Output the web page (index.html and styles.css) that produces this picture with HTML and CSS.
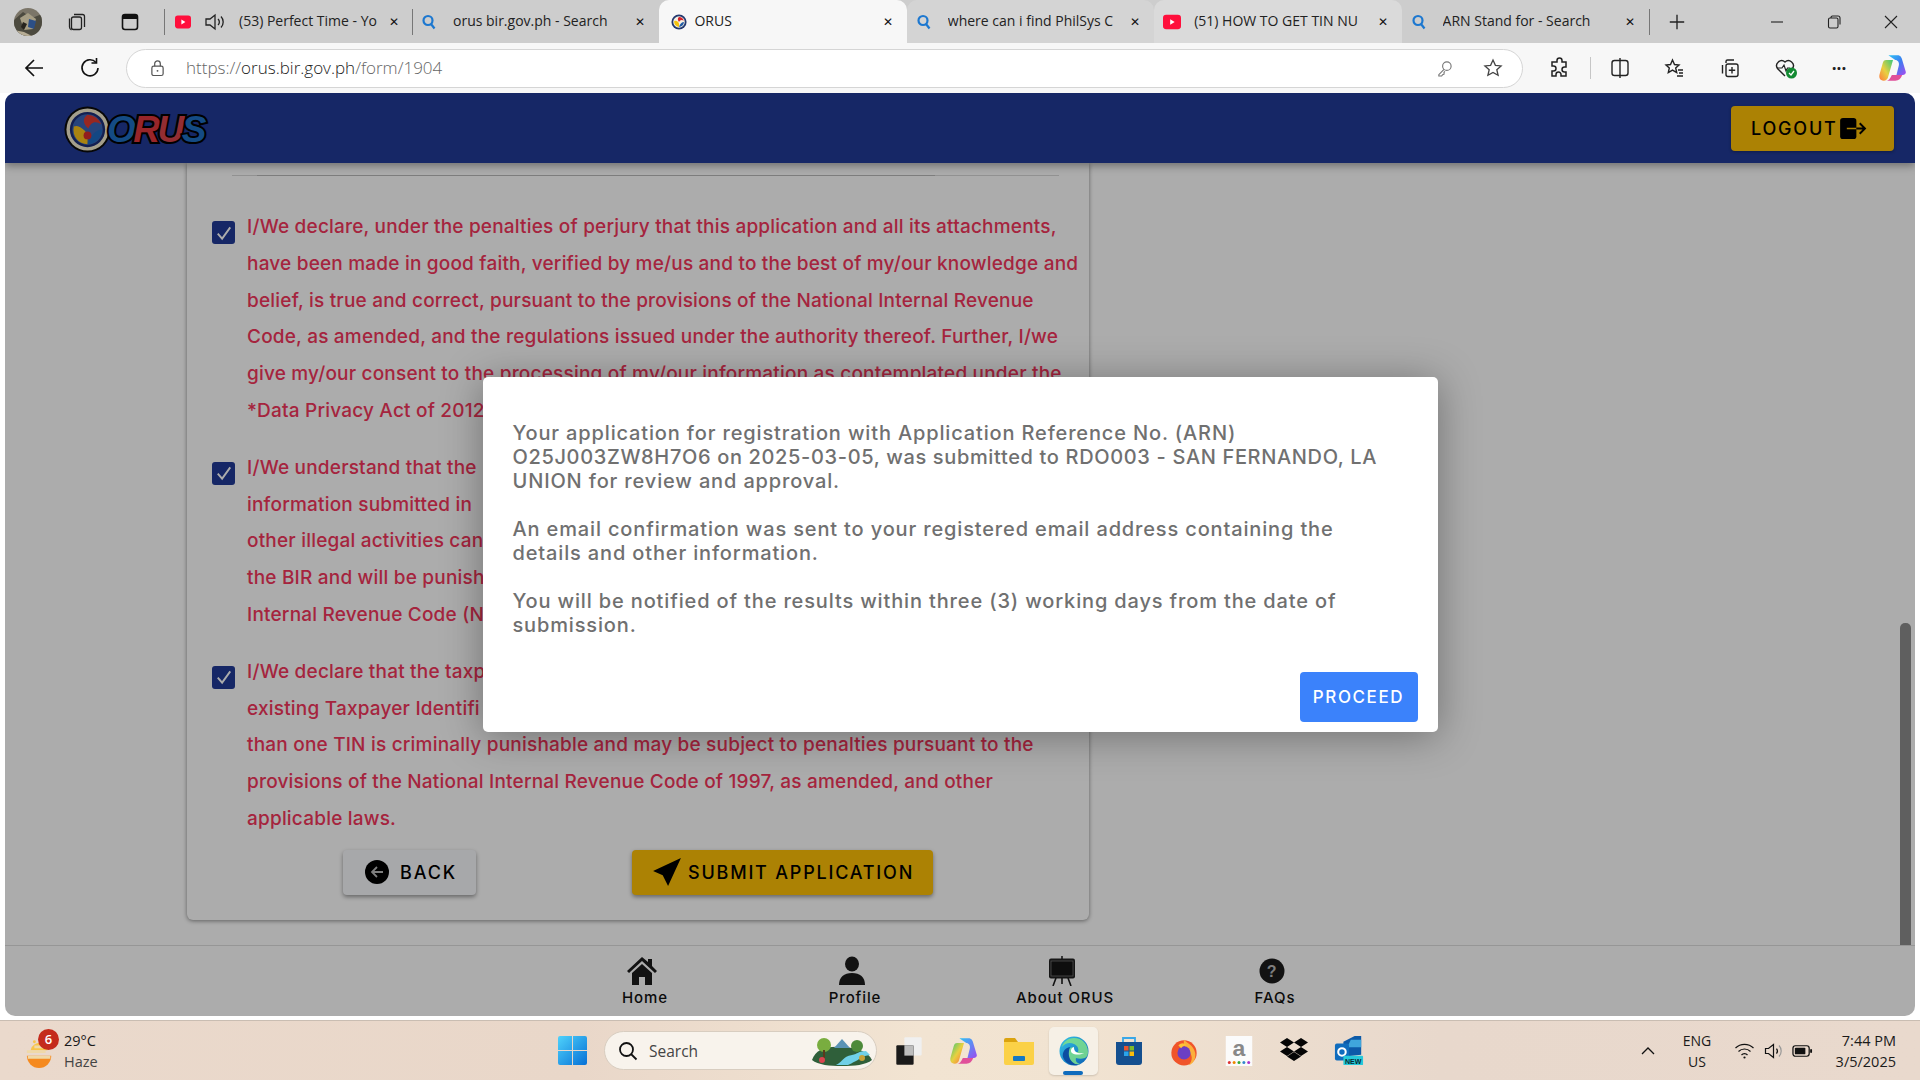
FILE: index.html
```html
<!DOCTYPE html>
<html lang="en">
<head>
<meta charset="utf-8">
<title>ORUS</title>
<link rel="stylesheet" href="styles.css">
</head>
<body>
<div class="tabbar">
  <div class="tb-left">
    <svg class="avatar" viewBox="0 0 28 28"><defs><clipPath id="av"><circle cx="14" cy="14" r="14"/></clipPath></defs><g clip-path="url(#av)"><rect width="28" height="28" fill="#7b7568"/><path d="M0 12 9 4l9 6 10-4v22H0z" fill="#4c4a3f"/><path d="M6 10l8-5 8 6-3 10-9 1z" fill="#a69d84"/><path d="M15 11l7 2-2 8-6-2z" fill="#2c4f86"/><path d="M9 14l4 2-3 6-3-3z" fill="#26231d"/><path d="M0 22l10 2 8 4H0z" fill="#b7ad95"/></g></svg>
    <svg class="ti ti-coll" viewBox="0 0 20 20" fill="none" stroke="#222" stroke-width="1.3"><path d="M7 2.5h8.5a2 2 0 0 1 2 2V15"/><rect x="4.5" y="5" width="10" height="12.5" rx="2"/><path d="M2.5 6.5V15a3.5 3.5 0 0 0 2 3"/></svg>
    <svg class="ti ti-vert" viewBox="0 0 20 20"><rect x="2.5" y="2.5" width="15" height="15" rx="2.5" fill="none" stroke="#111" stroke-width="1.6"/><path d="M3 3h14v4H3z" fill="#111"/></svg>
    <span class="sep sep-a"></span>
    <div class="tab tab-first">
      <svg class="fav" viewBox="0 0 20 20"><rect y="2" width="20" height="16" rx="3.5" fill="#ff0f3c"/><path d="M8 7l5 3-5 3z" fill="#fff"/></svg>
      <svg class="ti ti-sound" viewBox="0 0 22 20" fill="none" stroke="#222" stroke-width="1.3"><path d="M2 7h4l5-4v14l-5-4H2z"/><path d="M14 7a4 4 0 0 1 0 6M17 4.500a8 8 0 0 1 0 11"/></svg>
      <span class="tab-title">(53) Perfect Time - Yo</span>
      <span class="x">✕</span>
    </div>
    <span class="sep"></span>
  </div>
  <div class="tab">
    <svg class="fav" viewBox="0 0 16 16" fill="none" stroke="#1d78d0" stroke-width="2.200"><circle cx="7" cy="6.500" r="4.500"/><path d="M10 10l3.500 4.500"/></svg>
    <span class="tab-title">orus bir.gov.ph - Search</span><span class="x">✕</span>
  </div>
  <div class="tab tab-active">
    <svg class="fav" viewBox="0 0 18 18"><circle cx="9" cy="9" r="8.500" fill="#23386f"/><circle cx="9" cy="9" r="6.500" fill="#f6f2e4"/><path d="M9 3.500a5.500 5.500 0 0 1 5.300 4C12 6 10 7 9 9 7.500 7 7 5 9 3.500z" fill="#d8232a"/><path d="M3.600 8A5.500 5.500 0 0 0 9 14.500c0-2 .5-4-1-5.500-1-1-3-2-4.400-1z" fill="#f4c20d"/><path d="M9 14.500c3 0 5.500-2.500 5.500-5.500-2 0-4.500 2-5.500 5.500z" fill="#1f5aa6"/></svg>
    <span class="tab-title">ORUS</span><span class="x">✕</span>
  </div>
  <div class="tab tab-lite">
    <svg class="fav" viewBox="0 0 16 16" fill="none" stroke="#1d78d0" stroke-width="2.200"><circle cx="7" cy="6.500" r="4.500"/><path d="M10 10l3.500 4.500"/></svg>
    <span class="tab-title">where can i find PhilSys C</span><span class="x">✕</span>
  </div>
  <div class="tab tab-hover">
    <svg class="fav fav-yt" viewBox="0 0 20 20"><rect y="2" width="20" height="16" rx="3.500" fill="#ff0f3c"/><path d="M8 7l5 3-5 3z" fill="#fff"/></svg>
    <span class="tab-title">(51) HOW TO GET TIN NU</span><span class="x">✕</span>
  </div>
  <div class="tab">
    <svg class="fav" viewBox="0 0 16 16" fill="none" stroke="#1d78d0" stroke-width="2.200"><circle cx="7" cy="6.500" r="4.500"/><path d="M10 10l3.500 4.500"/></svg>
    <span class="tab-title">ARN Stand for - Search</span><span class="x">✕</span>
  </div>
  <span class="sep"></span>
  <svg class="ti ti-plus" viewBox="0 0 20 20" stroke="#222" stroke-width="1.500"><path d="M10 2v16M2 10h16"/></svg>
  <div class="winctl">
    <svg viewBox="0 0 14 14" stroke="#222" stroke-width="1.100" fill="none"><path d="M1 7h12"/></svg>
    <svg viewBox="0 0 14 14" stroke="#222" stroke-width="1.100" fill="none"><rect x="1.500" y="3" width="9.500" height="10" rx="1.500"/><path d="M4 3V2.500A1.500 1.500 0 0 1 5.500 1H11a2 2 0 0 1 2 2v6.500"/></svg>
    <svg viewBox="0 0 14 14" stroke="#222" stroke-width="1.100" fill="none"><path d="M1 1l12 12M13 1L1 13"/></svg>
  </div>
</div>

<div class="toolbar">
  <svg class="tool tool-back" viewBox="0 0 22 22" fill="none" stroke="#111" stroke-width="1.700"><path d="M20 11H3M11 3l-8 8 8 8"/></svg>
  <svg class="tool tool-reload" viewBox="0 0 22 22" fill="none" stroke="#111" stroke-width="1.600"><path d="M17 5.500A8 8 0 1 0 19 11"/><path d="M17.500 1v5h-5"/></svg>
  <div class="urlbar">
    <svg class="lock" viewBox="0 0 16 18" fill="none" stroke="#555" stroke-width="1.300"><rect x="2" y="7" width="12" height="10" rx="2"/><path d="M5 7V4.500a3 3 0 0 1 6 0V7"/><circle cx="8" cy="12" r="1" fill="#555" stroke="none"/></svg>
    <span class="url"><span class="url-dim">https://</span>orus.bir.gov.ph<span class="url-dim">/form/1904</span></span>
    <svg class="key" viewBox="0 0 18 18" fill="none" stroke="#777" stroke-width="1.200"><circle cx="11.500" cy="6.500" r="4.500"/><path d="M8.500 10 3 15.500V17h3l1-1.500 1.500-.5v-2l1-1"/></svg>
    <svg class="star" viewBox="0 0 20 20" fill="none" stroke="#444" stroke-width="1.300"><path d="M10 2l2.400 5.300 5.700.6-4.300 3.800 1.300 5.600L10 14.400l-5.100 2.900 1.300-5.600L1.900 7.900l5.700-.6z"/></svg>
  </div>
  <svg class="tool tool-ext" viewBox="0 0 22 22" fill="none" stroke="#222" stroke-width="1.500"><path d="M9 3.500a2.500 2.500 0 0 1 5 0V5h4v5h-1.500a2.500 2.500 0 0 0 0 5H18v4h-5v-1.500a2.500 2.500 0 0 0-5 0V19H4v-5h1.500a2.500 2.500 0 0 0 0-5H4V5h5z"/></svg>
  <span class="tool-sep"></span>
  <svg class="tool tool-split" viewBox="0 0 22 22" fill="none" stroke="#222" stroke-width="1.400"><rect x="3" y="3.500" width="16" height="15" rx="2.500"/><path d="M11 1v20"/></svg>
  <svg class="tool tool-favs" viewBox="0 0 22 22" fill="none" stroke="#222" stroke-width="1.400"><path d="M9.500 3l2 4.500 4.500.5-3.300 3 1 4.500-4.200-2.400L5.300 15.500l1-4.500L3 8l4.500-.5zM15 13h5M16 16h4M14 19h6"/></svg>
  <svg class="tool tool-coll" viewBox="0 0 22 22" fill="none" stroke="#222" stroke-width="1.400"><path d="M7 6V4.500A1.500 1.500 0 0 1 8.500 3H15M3.500 8v8.500"/><rect x="7" y="7" width="12" height="12.500" rx="2"/><path d="M13 10v6.500M9.800 13.200h6.400"/></svg>
  <svg class="tool tool-health" viewBox="0 0 24 22"><path d="M11 19 3.500 11.500A5 5 0 0 1 11 5a5 5 0 0 1 7.500 6.500" fill="none" stroke="#222" stroke-width="1.400"/><path d="M3 11h5l2-3 2 6 1.500-3H16" fill="none" stroke="#222" stroke-width="1.200"/><circle cx="17.500" cy="16" r="5.500" fill="#128a32"/><path d="M15 16l2 2 3-4" fill="none" stroke="#fff" stroke-width="1.300"/></svg>
  <span class="more">···</span>
  <svg class="tool tool-copilot" viewBox="0 0 26 26"><defs><linearGradient id="cp1" x1="0" y1="0" x2="1" y2="1"><stop offset="0" stop-color="#2dc3f5"/><stop offset=".5" stop-color="#3c7df0"/><stop offset="1" stop-color="#a64cf0"/></linearGradient><linearGradient id="cp2" x1="0" y1="1" x2="1" y2="0"><stop offset="0" stop-color="#ff7a3c"/><stop offset=".45" stop-color="#e8d040"/><stop offset="1" stop-color="#38c87a"/></linearGradient></defs><path d="M9 2h8c2.500 0 3.500 2 4 4l3 10c.6 2-1 3-3 3h-5l2-8c.8-3-1-5-3-5z" fill="url(#cp1)"/><path d="M7 6h6L9 20c-.6 3-2 4-4 4-3.500 0-4.500-3-3.500-6L4 9c.5-2 1.500-3 3-3z" fill="url(#cp2)"/><path d="M12 19h9c-1 3-3 5-6 5H7c2 0 3.500-1.500 5-5z" fill="#e0509a"/></svg>
</div>

<div class="winbody">
  <div class="app">
    <header class="app-header">
      <div class="logo">
        <svg class="seal" viewBox="0 0 48 48"><circle cx="24" cy="24" r="23.500" fill="#0b0b0b"/><circle cx="24" cy="24" r="21.500" fill="#f4ecd0"/><circle cx="24" cy="24" r="18" fill="#1d2f78"/><circle cx="24" cy="24" r="15.500" fill="#3a66b8"/><path d="M24 9a15 15 0 0 1 14 10C32 14 27 17 25 23c-5-4-7-10-1-14z" fill="#e23a32"/><path d="M10 21c-2 10 5 18 14 18 0-6 1-10-3-14-3-3-7-6-11-4z" fill="#fbc21a"/><path d="M24 39c8 0 15-7 15-15-6 0-12 6-15 15z" fill="#1d6ac2"/><circle cx="24" cy="30" r="4" fill="#d92b2b"/></svg>
        <span class="logo-text"><span class="lo">O</span><span class="lr">R</span><span class="lu">U</span><span class="ls">S</span></span>
      </div>
      <button class="logout">LOGOUT
        <svg class="logout-ic" viewBox="0 0 28 22"><rect x="0" y="0" width="17" height="22" rx="3" fill="#000"/><path d="M7 11h10" stroke="#ffc107" stroke-width="1.800"/><path d="M17 11h9M20.500 5.500 26 11l-5.500 5.500" fill="none" stroke="#000" stroke-width="2"/></svg>
      </button>
    </header>

    <div class="app-main">
      <div class="scroll-content">
        <section class="card">
          <div class="rule"></div>
          <div class="decl">
            <span class="check"><svg viewBox="0 0 16 16"><path d="M3 8.500 6.500 12.500 13 3.500" fill="none" stroke="#fff" stroke-width="1.500"/></svg></span>
            <p>I/We declare, under the penalties of perjury that this application and all its attachments,<br>have been made in good faith, verified by me/us and to the best of my/our knowledge and<br>belief, is true and correct, pursuant to the provisions of the National Internal Revenue<br>Code, as amended, and the regulations issued under the authority thereof. Further, I/we<br>give my/our consent to the processing of my/our information as contemplated under the<br>*Data Privacy Act of 2012 (</p>
          </div>
          <div class="decl">
            <span class="check"><svg viewBox="0 0 16 16"><path d="M3 8.500 6.500 12.500 13 3.500" fill="none" stroke="#fff" stroke-width="1.500"/></svg></span>
            <p>I/We understand that the<br>information submitted in<br>other illegal activities can<br>the BIR and will be punish<br>Internal Revenue Code (N</p>
          </div>
          <div class="decl decl-last">
            <span class="check"><svg viewBox="0 0 16 16"><path d="M3 8.500 6.500 12.500 13 3.500" fill="none" stroke="#fff" stroke-width="1.500"/></svg></span>
            <p>I/We declare that the taxp<br>existing Taxpayer Identifi<br>than one TIN is criminally punishable and may be subject to penalties pursuant to the<br>provisions of the National Internal Revenue Code of 1997, as amended, and other<br>applicable laws.</p>
          </div>
          <div class="actions">
            <button class="btn btn-back">
              <svg class="btn-ic" viewBox="0 0 24 24"><circle cx="12" cy="12" r="12" fill="#000"/><path d="M18 12H7M12 7l-5 5 5 5" fill="none" stroke="#bbb" stroke-width="1.800"/></svg>
              BACK
            </button>
            <button class="btn btn-submit">
              <svg class="btn-ic-plane" viewBox="0 0 28 28"><path d="M27 1 1 13l9 4zM27 1 10 17l5 10z" fill="#000"/></svg>
              SUBMIT APPLICATION
            </button>
          </div>
        </section>
      </div>
      <div class="scrolltrack"><div class="scrollthumb"></div></div>
    </div>

    <footer class="app-footer">
      <div class="nav-item">
        <svg class="nav-ic" viewBox="0 0 32 30"><path d="M16 1 1 15l2 2L16 5l13 12 2-2-5-5V3h-4v3z" fill="#1c1c1c"/><path d="M6 17 16 8l10 9v12h-7v-8h-6v8H6z" fill="#1c1c1c"/></svg>
        <span>Home</span>
      </div>
      <div class="nav-item">
        <svg class="nav-ic" viewBox="0 0 32 30"><ellipse cx="16" cy="8" rx="7" ry="7.500" fill="#1c1c1c"/><path d="M3 29c0-8 5-12 13-12s13 4 13 12z" fill="#1c1c1c"/></svg>
        <span>Profile</span>
      </div>
      <div class="nav-item">
        <svg class="nav-ic" viewBox="0 0 32 30"><path d="M16 0v3" stroke="#1c1c1c" stroke-width="1.500"/><rect x="3" y="2.500" width="26" height="20" rx="2" fill="#222"/><rect x="5" y="5" width="22" height="15" fill="#151515" stroke="#777" stroke-width=".8"/><path d="M10 22 7 30M22 22l3 8M16 22v6" stroke="#1c1c1c" stroke-width="1.600"/></svg>
        <span>About ORUS</span>
      </div>
      <div class="nav-item">
        <svg class="nav-ic" viewBox="0 0 32 30"><circle cx="16" cy="15" r="12.500" fill="#1c1c1c"/><text x="16" y="21" class="q">?</text></svg>
        <span>FAQs</span>
      </div>
    </footer>

    <div class="overlay">
      <div class="modal">
        <div class="modal-body">
          <p>Your application for registration with Application Reference No. (ARN)<br><span class="tight">O25J003ZW8H7O6 on 2025-03-05, was submitted to RDO003 - SAN FERNANDO, LA</span><br>UNION for review and approval.</p>
          <p>An email confirmation was sent to your registered email address containing the<br>details and other information.</p>
          <p>You will be notified of the results within three (3) working days from the date of<br>submission.</p>
        </div>
        <div class="modal-foot"><button class="proceed">PROCEED</button></div>
      </div>
    </div>
  </div>
</div>

<div class="taskbar">
  <div class="tk-left">
    <div class="weather">
      <svg class="sun" viewBox="0 0 32 32"><path d="M2 19h26a13 13 0 0 1-26 0z" fill="#f58a1f"/><path d="M10 7a9 9 0 0 1 14 6H6a9 9 0 0 1 4-6z" fill="#f8c44a"/><path d="M2 13h20v3H2zM3 19h24v3H3zM10 8h14v3H10z" fill="#efd9a8"/><circle cx="10" cy="4" r="1.500" fill="#f8c44a"/></svg>
      <span class="badge">6</span>
      <div class="wtext"><span class="w1">29°C</span><span class="w2">Haze</span></div>
    </div>
  </div>
  <svg class="start" viewBox="0 0 29 29"><defs><linearGradient id="st" x1="0" y1="0" x2="1" y2="1"><stop offset="0" stop-color="#4fd2fb"/><stop offset="1" stop-color="#0670d6"/></linearGradient></defs><path fill="url(#st)" d="M0 2q0-2 2-2h12v14H0zM15 0h12q2 0 2 2v12H15zM0 15h14v14H2q-2 0-2-2zM15 15h14v12q0 2-2 2H15z"/></svg>
  <div class="tk-search">
    <svg class="tk-search-ic" viewBox="0 0 20 20" fill="none" stroke="#111" stroke-width="1.800"><circle cx="8.500" cy="8.500" r="6.500"/><path d="M13 13l5.500 5.500"/></svg>
    <span class="tk-search-text">Search</span>
    <svg class="scene" viewBox="0 0 64 30"><path d="M2 24c4-10 12-14 30-13s26 5 30 13c-6 5-18 6-30 6S8 29 2 24z" fill="#2f5f3a"/><path d="M24 12l8-9 8 9z" fill="#5a93b5"/><path d="M26 29c8-4 6-8 16-10 6-1 6-4 14-4l4 4c-8 1-10 4-14 6s-6 3-8 4z" fill="#6fd0e8"/><circle cx="14" cy="9" r="7" fill="#79ad3f"/><rect x="13" y="14" width="2" height="8" fill="#5b3a1c"/><circle cx="47" cy="10" r="6" fill="#4d8a3a"/><circle cx="12" cy="24" r="3" fill="#d8454f"/><circle cx="52" cy="22" r="3" fill="#c6a23a"/></svg>
  </div>
  <div class="tk-apps">
    <span class="tk-app"><svg viewBox="0 0 26 26"><rect x="9" y="1" width="15" height="16" rx="1" fill="#f0f0f0"/><rect x="2" y="8" width="15" height="17" rx="1" fill="#1a1a1a"/><rect x="9" y="8" width="8" height="9" fill="#bdbdbd"/></svg></span>
    <span class="tk-app"><svg viewBox="0 0 26 26"><defs><linearGradient id="c1" x1="0" y1="0" x2="1" y2="1"><stop offset="0" stop-color="#2dc3f5"/><stop offset="1" stop-color="#9a4cf0"/></linearGradient><linearGradient id="c2" x1="0" y1="0" x2="1" y2="1"><stop offset="0" stop-color="#38c87a"/><stop offset=".5" stop-color="#e8d040"/><stop offset="1" stop-color="#ff6a3c"/></linearGradient></defs><path d="M9 2h8c2.500 0 3.500 2 4 4l3 10c.6 2-1 3-3 3h-5l2-8c.8-3-1-5-3-5z" fill="url(#c1)"/><path d="M7 6h6L9 20c-.6 3-2 4-4 4-3.500 0-4.500-3-3.500-6L4 9c.5-2 1.500-3 3-3z" fill="url(#c2)"/><path d="M12 19h9c-1 3-3 5-6 5H7c2 0 3.500-1.500 5-5z" fill="#e0509a"/></svg></span>
    <span class="tk-app"><svg viewBox="0 0 30 28"><path d="M0 3q0-2 2-2h9l3 4H0z" fill="#dba30f"/><path d="M0 5h30v21q0 2-2 2H2q-2 0-2-2z" fill="#fbd147"/><rect x="9" y="19" width="12" height="5" rx="1" fill="#1578c4"/></svg></span>
    <span class="tk-app tk-active"><svg viewBox="0 0 30 30"><defs><linearGradient id="e1" x1="0" y1="0" x2="1" y2="1"><stop offset="0" stop-color="#35c4e8"/><stop offset="1" stop-color="#0a5fb4"/></linearGradient></defs><circle cx="15" cy="15" r="14.500" fill="url(#e1)"/><path d="M29 16c0-8-6-14-14-14C9 2 4 6 3 11c3-4 8-5 12-3 4 2 5 5 4 8-3 0-6 0-6-2 0-1 1-2 2-3-5 0-8 4-7 9 1 6 7 9 13 8-3-1-5-3-4-6 3 1 6 1 9 0 2-1 3-3 3-6z" fill="#7fe08a" opacity=".85"/><path d="M11 11c-5 1-8 5-7 10 2 6 8 9 15 8-4-1-8-4-9-9-.5-3 0-6 1-9z" fill="#0b4ea2"/><path d="M15 11c-3 1-4 4-2 6 3 2 8 2 12 0-1 0-6 1-8-1s-2-3-2-5z" fill="#fff"/></svg><i class="tk-ind"></i></span>
    <span class="tk-app"><svg viewBox="0 0 28 30"><path d="M8 6V2h12v4" fill="none" stroke="#38a7e8" stroke-width="1.800"/><path d="M1 6h26v20q0 3-3 3H4q-3 0-3-3z" fill="#144f8f"/><rect x="9" y="10" width="4.500" height="4.500" fill="#e8552e"/><rect x="14.500" y="10" width="4.500" height="4.500" fill="#7fba2a"/><rect x="9" y="15.500" width="4.500" height="4.500" fill="#2aa4ea"/><rect x="14.500" y="15.500" width="4.500" height="4.500" fill="#fbbc0a"/></svg></span>
    <span class="tk-app"><svg viewBox="0 0 30 32"><circle cx="15" cy="18" r="13.500" fill="#f0542a"/><path d="M15 4c2 3 10 5 12 14 1 7-3 12-7 13 5-5 4-12-1-15-2-2-5-6-4-12z" fill="#fbb03b"/><circle cx="15" cy="18" r="7" fill="#6b3fc4"/><path d="M9 10c3-3 6-3 9 0-3 0-5 1-6 3z" fill="#fcc437"/></svg></span>
    <span class="tk-app"><svg viewBox="0 0 30 34"><rect width="30" height="34" fill="#fbfbfb"/><text x="15" y="23" class="az">a</text><g><circle cx="4" cy="30" r="1.700" fill="#d33"/><circle cx="9.500" cy="30" r="1.700" fill="#e80"/><circle cx="15" cy="30" r="1.700" fill="#3a3"/><circle cx="20.500" cy="30" r="1.700" fill="#38c"/><circle cx="26" cy="30" r="1.700" fill="#a3c"/></g></svg></span>
    <span class="tk-app"><svg viewBox="0 0 30 28"><path d="M8 1l7 4.500L8 10 1 5.500zM22 1l7 4.500L22 10l-7-4.500zM8 10l7 4.500L8 19l-7-4.500zM22 10l7 4.500L22 19l-7-4.500zM15 15l7 4.500L15 24l-7-4.500z" fill="#050505"/></svg></span>
    <span class="tk-app"><svg viewBox="0 0 32 32"><path d="M10 6 22 0h7v20l-19 2z" fill="#0d5aa8"/><path d="M18 4h11v8H14z" fill="#3fa6dc"/><rect x="1" y="8" width="15" height="18" rx="2" fill="#0f6cbd"/><circle cx="8.500" cy="17" r="4" fill="none" stroke="#fff" stroke-width="2.200"/><rect x="10" y="21" width="21" height="10" rx="1" fill="#25c9d9"/><text x="20.500" y="29.500" class="newt">NEW</text></svg></span>
  </div>
  <svg class="chev" viewBox="0 0 14 10" fill="none" stroke="#111" stroke-width="1.300"><path d="M1 8l6-6 6 6"/></svg>
  <div class="lang"><span>ENG</span><span>US</span></div>
  <div class="tray">
    <svg viewBox="0 0 20 18" fill="none" stroke="#111" stroke-width="1.200"><path d="M1 6a13 13 0 0 1 18 0M4 9.500a8.500 8.500 0 0 1 12 0M7 13a4 4 0 0 1 6 0"/><circle cx="10" cy="15.500" r="1.100" fill="#111" stroke="none"/></svg>
    <svg viewBox="0 0 20 18" fill="none" stroke="#111" stroke-width="1.200"><path d="M2 6.500h3l5-4v13l-5-4H2z"/><path d="M13 6.500a4 4 0 0 1 0 5"/><path d="M15.500 3.500a8 8 0 0 1 0 11" stroke="#999"/></svg>
    <svg viewBox="0 0 22 18"><rect x="1" y="3.500" width="17" height="11" rx="2.500" fill="none" stroke="#111" stroke-width="1.300"/><rect x="3" y="5.500" width="11" height="7" rx="1" fill="#111"/><rect x="19" y="7" width="2" height="4" rx="1" fill="#111"/></svg>
  </div>
  <div class="clock"><span>7:44 PM</span><span>3/5/2025</span></div>
</div>
</body>
</html>
```
FILE: styles.css
```css
* { box-sizing: border-box; }
html, body { margin: 0; height: 100%; overflow: hidden; }
body {
  display: flex; flex-direction: column; width: 1920px; height: 1080px;
  font-family: "Open Sans", "Noto Sans", sans-serif; background: #f7f7f7; color: #111;
}
svg { display: block; flex: none; }

/* browser tab strip */
.tabbar { height: 43px; background: #cdcdcd; display: flex; align-items: center; flex: none; }
.tb-left { display: flex; align-items: center; width: 412px; height: 43px; position: relative; }
.avatar { width: 28px; height: 28px; margin-left: 14px; }
.ti-coll { width: 20px; height: 20px; margin-left: 25px; }
.ti-vert { width: 20px; height: 20px; margin-left: 33px; }
.sep { width: 1px; height: 26px; background: #777; flex: none; }
.sep-a { margin-left: 24px; }
.tab {
  width: 247.4px; height: 43px; display: flex; align-items: center; padding: 0 12px 0 9px;
  font-size: 14px; color: #222; flex: none; border-radius: 10px 10px 0 0;
}
.tab-first { width: 247px; padding: 0 11px 0 10px; }
.tab-active { background: #f7f7f7; padding-left: 12px; }
.tab-lite { background: #d4d4d4; }
.tab-hover { background: #dadada; }
.fav { width: 16px; height: 16px; }
.fav-yt { width: 18px; height: 18px; }
.ti-sound { width: 22px; height: 20px; margin-left: 13px; }
.tab-title {
  flex: 1; margin: -2px 10px 0 16px; white-space: nowrap; overflow: hidden; min-width: 0;
}
.tab-active .tab-title { margin-left: 7px; }
.tab-first .tab-title { margin-left: 13px; }
.tab-hover .tab-title { margin-left: 13px; }
.x { width: 14px; font-size: 12px; color: #111; text-align: center; flex: none; line-height: 1; }
.ti-plus { width: 18px; height: 18px; margin-left: 18px; }
.winctl { margin-left: auto; display: flex; gap: 43px; padding-right: 22px; }
.winctl svg { width: 14px; height: 14px; }

/* toolbar */
.toolbar { height: 50px; flex: none; background: #f7f7f7; display: flex; align-items: center; }
.tool { width: 22px; height: 22px; }
.tool-back { margin-left: 23px; }
.tool-reload { margin-left: 34px; }
.urlbar {
  margin-left: 25px; width: 1397px; height: 39px; background: #fff; border: 1px solid #d5d5d5;
  border-radius: 20px; display: flex; align-items: center; padding-left: 23px;
}
.lock { width: 15px; height: 18px; }
.url { margin: -1px 0 0 21px; font-size: 17px; color: #222; white-space: nowrap; font-weight: 300; }
.url-dim { color: #666; }
.key { width: 17px; height: 17px; margin-left: auto; }
.star { width: 20px; height: 20px; margin: 0 19px 0 30px; }
.tool-ext { margin-left: 25px; }
.tool-sep { width: 1px; height: 22px; background: #c6c6c6; margin-left: 20px; }
.tool-split { margin-left: 18px; }
.tool-favs { margin-left: 32px; }
.tool-coll { margin-left: 34px; }
.tool-health { margin-left: 33px; width: 24px; }
.more { margin-left: 31px; font-size: 17px; font-weight: 700; color: #222; width: 20px; text-align: center; }
.tool-copilot { margin-left: 29px; width: 30px; height: 30px; }

/* app window */
.winbody { flex: 1; background: #fff; padding: 0 5px 4px; min-height: 0; display: flex; }
.app {
  position: relative; flex: 1; display: flex; flex-direction: column; background: #fff;
  border-radius: 10px; overflow: hidden;
}
.app-header {
  height: 70px; flex: none; background: #213a97; display: flex; align-items: center;
  justify-content: space-between; padding: 0 21px 0 59px; position: relative;
  box-shadow: 0 3px 8px rgba(0,0,0,.35);
}
.logo { display: flex; align-items: center; padding-top: 2px; }
.seal { width: 47px; height: 47px; }
.logo-text {
  font: italic 900 37px/1 "Liberation Sans", sans-serif; margin-left: -4px; letter-spacing: -2.5px;
  -webkit-text-stroke: 4px #000; paint-order: stroke fill;
}
.lo { color: #1e6fc4; } .lr { color: #e2383e; } .lu { color: #d9444a; } .ls { color: #1e6fc4; }
.logout {
  width: 163px; height: 45px; border: 0; border-radius: 4px; background: #ffc107; color: #000;
  font: 500 18px "Inter", sans-serif; letter-spacing: 1.8px; display: flex; align-items: center;
  padding: 0 0 0 20px; box-shadow: 0 1px 3px rgba(0,0,0,.3);
}
.logout-ic { width: 27px; height: 21px; margin-left: 2px; }

.app-main { flex: 1; display: flex; min-height: 0; }
.scroll-content { flex: 1; padding-left: 182px; overflow: hidden; }
.scrolltrack { width: 11px; margin-right: 4px; padding-top: 460px; display: flex; }
.scrollthumb { flex: 1; background: #8d8d8d; border-radius: 5px 5px 0 0; }

.card {
  width: 902px; background: #fff; border-radius: 0 0 6px 6px; padding: 12px 10px 25px 25px;
  box-shadow: 0 1px 4px rgba(0,0,0,.45);
}
.rule { height: 1px; background: linear-gradient(90deg, #d9d9d9 0 3%, #bbb 3% 85%, #d9d9d9 85%); margin: 0 20px 33px 20px; }
.decl { display: flex; gap: 12px; margin-bottom: 20px; }
.decl-last { margin-bottom: 12px; }
.decl p {
  margin: 0; white-space: nowrap; color: #f5365c; letter-spacing: .2px;
  font: 500 19px/36.8px "Inter", sans-serif;
}
.check {
  width: 23px; height: 23px; margin-top: 12px; border-radius: 3px; background: #213a97; flex: none;
  display: flex; align-items: center; justify-content: center;
}
.check svg { width: 20px; height: 20px; }
.actions { display: flex; padding-left: 131px; gap: 156px; }
.btn {
  height: 45px; border: 0; border-radius: 4px; color: #000; display: flex; align-items: center;
  font: 500 18px "Inter", sans-serif; letter-spacing: 1.9px; box-shadow: 0 2px 4px rgba(0,0,0,.4);
}
.btn-back { width: 133px; background: #f8f9fd; padding: 0 0 0 22px; }
.btn-ic { width: 24px; height: 24px; margin-right: 11px; }
.btn-submit { width: 301px; background: #ffc107; padding: 0 0 0 20px; letter-spacing: 1.8px; }
.btn-ic-plane { width: 30px; height: 30px; margin-right: 6px; }

.app-footer {
  height: 71px; flex: none; border-top: 1px solid #dedede; display: flex; justify-content: center;
  background: #fff;
}
.nav-item {
  width: 210px; display: flex; flex-direction: column; align-items: center; padding-top: 10px;
  font: 500 15px/20px "Inter", sans-serif; letter-spacing: .9px; color: #111;
}
.nav-ic { width: 32px; height: 30px; margin: 0 6px 2px 0; }
.q { font: 700 16px "Liberation Sans", sans-serif; fill: #bbb; text-anchor: middle; }

/* modal */
.overlay {
  position: absolute; inset: 0; background: rgba(0,0,0,.325); display: flex;
  align-items: center; justify-content: center;
}
.modal {
  width: 955px; height: 355px; background: #fff; border-radius: 5px; padding: 44px 20px 10px 30px;
  display: flex; flex-direction: column; box-shadow: 0 4px 40px rgba(0,0,0,.35);
}
.modal-body { flex: 1; }
.modal-body p {
  margin: 0 0 24px; white-space: nowrap; color: #707070; letter-spacing: .85px;
  font: 500 20px/24px "Inter", sans-serif;
}
.tight { letter-spacing: .65px; }
.modal-foot { display: flex; justify-content: flex-end; }
.proceed {
  width: 118px; height: 50px; border: 0; border-radius: 4px; background: #3b82fb; color: #fff;
  font: 500 17px "Inter", sans-serif; letter-spacing: 1.6px; padding: 0;
}

/* windows taskbar */
.taskbar {
  height: 60px; flex: none; display: flex; align-items: center; border-top: 1px solid #c9bdb2;
  background: linear-gradient(90deg, #ead9cc 0%, #e9d7c9 30%, #f2e4d2 48%, #f1e3d1 56%, #e8d8cc 75%, #e9d9cd 100%);
  color: #1a1a1a;
}
.tk-left { width: 558px; flex: none; }
.weather { position: relative; display: flex; align-items: center; padding-left: 25px; }
.sun { width: 30px; height: 32px; margin-top: 4px; }
.badge {
  position: absolute; left: 38px; top: -1px; width: 21px; height: 21px; border-radius: 50%;
  background: #c42b1c; color: #fff; font-size: 13px; line-height: 21px; text-align: center; font-weight: 600;
}
.wtext { display: flex; flex-direction: column; margin-left: 9px; font-size: 14.500px; line-height: 21px; }
.w2 { color: #444; }
.start { width: 29px; height: 29px; }
.tk-search {
  margin-left: 17px; width: 273px; height: 39px; border-radius: 20px; background: #f8f3ec;
  border: 1px solid #d8cdc0; display: flex; align-items: center; padding-left: 13px; position: relative;
}
.tk-search-ic { width: 20px; height: 20px; }
.tk-search-text { margin-left: 11px; font-size: 15.500px; color: #444; }
.scene { width: 64px; height: 30px; margin-left: auto; margin-right: 2px; }
.tk-apps { display: flex; margin-left: 4px; }
.tk-app { width: 55px; height: 48px; display: flex; align-items: center; justify-content: center; position: relative; }
.tk-app svg { width: 30px; height: 30px; }
.tk-active { background: #f6f0e6; border-radius: 5px; box-shadow: 0 1px 2px rgba(0,0,0,.15); margin: 0 3px; width: 49px; }
.tk-ind { position: absolute; left: 14px; bottom: 0; width: 20px; height: 4px; border-radius: 2px; background: #0f6cbd; }
.az { font: 700 26px "Liberation Sans", sans-serif; fill: #888; text-anchor: middle; }
.newt { font: 700 7.500px "Liberation Sans", sans-serif; fill: #042a33; text-anchor: middle; }
.chev { width: 14px; height: 10px; margin-left: 265px; }
.lang { display: flex; flex-direction: column; align-items: center; width: 40px; margin-left: 22px; font-size: 14px; line-height: 21px; }
.tray { display: flex; gap: 8px; margin-left: 17px; }
.tray svg { width: 21px; height: 18px; }
.clock { margin-left: 20px; display: flex; flex-direction: column; align-items: flex-end; font-size: 14.500px; line-height: 21px; width: 63px; }
```
